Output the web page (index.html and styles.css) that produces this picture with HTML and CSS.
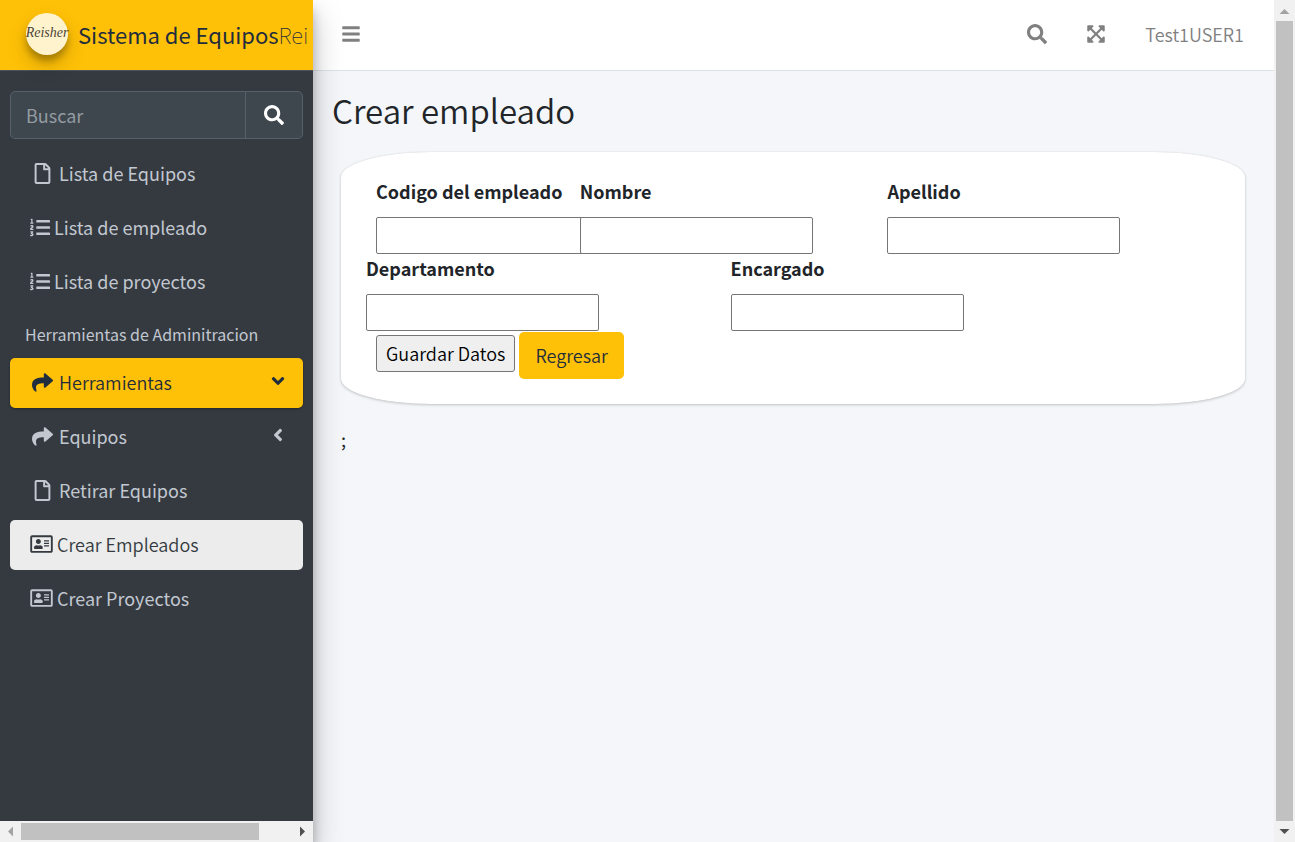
FILE: index.html
```html
<!DOCTYPE html>
<html lang="es">
<head>
<meta charset="utf-8">
<title>Crear empleado</title>
<link rel="stylesheet" href="styles.css">
</head>
<body>
<svg class="sprite" aria-hidden="true">
  <symbol id="file" viewBox="0 0 384 512"><path d="M369.9 97.9L286 14C277 5 264.8-.1 252.1-.1H48C21.5 0 0 21.5 0 48v416c0 26.500 21.500 48 48 48h288c26.500 0 48-21.500 48-48V131.900c0-12.700-5.100-25-14.100-34zM332.100 128H256V51.900l76.100 76.100zM48 464V48h160v104c0 13.300 10.700 24 24 24h104v288H48z"/></symbol>
  <symbol id="share" viewBox="0 0 512 512"><path d="M503.691 189.836L327.687 37.851C312.281 24.546 288 35.347 288 56.015v80.053C127.371 137.907 0 170.100 0 322.326c0 61.441 39.581 122.309 83.333 154.132 13.653 9.931 33.111-2.533 28.077-18.631C66.066 312.814 132.917 274.316 288 272.085V360c0 20.700 24.300 31.453 39.687 18.164l176.004-152c11.071-9.562 11.086-26.753 0-36.328z"/></symbol>
  <symbol id="bars" viewBox="0 0 448 512"><path d="M16 132h416c8.837 0 16-7.163 16-16V76c0-8.837-7.163-16-16-16H16C7.163 60 0 67.163 0 76v40c0 8.837 7.163 16 16 16zm0 160h416c8.837 0 16-7.163 16-16v-40c0-8.837-7.163-16-16-16H16c-8.837 0-16 7.163-16 16v40c0 8.837 7.163 16 16 16zm0 160h416c8.837 0 16-7.163 16-16v-40c0-8.837-7.163-16-16-16H16c-8.837 0-16 7.163-16 16v40c0 8.837 7.163 16 16 16z"/></symbol>
  <symbol id="search" viewBox="0 0 512 512"><path d="M505 442.700L405.300 343c-4.500-4.500-10.600-7-17-7H372c27.600-35.300 44-79.700 44-128C416 93.100 322.900 0 208 0S0 93.100 0 208s93.100 208 208 208c48.300 0 92.700-16.400 128-44v16.300c0 6.400 2.500 12.500 7 17l99.700 99.700c9.400 9.400 24.600 9.400 33.900 0l28.300-28.300c9.400-9.400 9.400-24.600.1-34zM208 336c-70.700 0-128-57.200-128-128 0-70.700 57.200-128 128-128 70.700 0 128 57.200 128 128 0 70.700-57.200 128-128 128z"/></symbol>
  <symbol id="expand" viewBox="0 0 448 512"><path d="M448 344v112a23.940 23.940 0 0 1-24 24H312c-21.390 0-32.090-25.900-17-41l36.200-36.200L224 295.600 116.770 402.900 153 439c15.090 15.100 4.390 41-17 41H24a23.940 23.940 0 0 1-24-24V344c0-21.400 25.890-32.100 41-17l36.190 36.200L184.460 256 77.180 148.700 41 185c-15.100 15.100-41 4.400-41-17V56a23.940 23.940 0 0 1 24-24h112c21.390 0 32.090 25.900 17 41l-36.200 36.200L224 216.400l107.230-107.300L295 73c-15.090-15.100-4.390-41 17-41h112a23.940 23.940 0 0 1 24 24v112c0 21.400-25.890 32.100-41 17l-36.190-36.200L263.540 256l107.280 107.300L407 327.100c15.100-15.200 41-4.500 41 16.900z"/></symbol>
  <symbol id="angle" viewBox="0 0 256 512"><path d="M31.700 239l136-136c9.400-9.400 24.600-9.400 33.900 0l22.600 22.600c9.400 9.400 9.400 24.600 0 33.900L127.900 256l96.400 96.400c9.400 9.400 9.400 24.600 0 33.900L201.700 409c-9.400 9.400-24.600 9.400-33.900 0l-136-136c-9.500-9.400-9.500-24.600-.1-34z"/></symbol>
  <symbol id="list" viewBox="0 0 512 512"><path d="M61.770 401l17.500-20.150a19.920 19.920 0 0 0 5.070-14.190v-3.310C84.340 356 80.500 352 73 352H16a8 8 0 0 0-8 8v16a8 8 0 0 0 8 8h22.830a157.410 157.410 0 0 0-11 12.310l-5.610 7c-4 5.070-5.250 10.130-2.800 14.880l1.050 1.930c3 5.760 6.290 7.880 12.250 7.880h4.730c10.330 0 15.940 2.440 15.940 9.090 0 4.720-4.200 8.220-14.360 8.220a41.540 41.540 0 0 1-15.470-3.120c-6.490-3.880-11.740-3.500-15.600 3.120l-5.590 9.310c-3.720 6.130-3.190 11.720 2.630 15.940 7.710 4.690 20.380 9.440 37 9.440 34.160 0 48.500-22.750 48.500-44.120-.03-14.380-9.120-29.760-28.730-34.880zM496 224H176a16 16 0 0 0-16 16v32a16 16 0 0 0 16 16h320a16 16 0 0 0 16-16v-32a16 16 0 0 0-16-16zm0-160H176a16 16 0 0 0-16 16v32a16 16 0 0 0 16 16h320a16 16 0 0 0 16-16V80a16 16 0 0 0-16-16zm0 320H176a16 16 0 0 0-16 16v32a16 16 0 0 0 16 16h320a16 16 0 0 0 16-16v-32a16 16 0 0 0-16-16zM16 160h64a8 8 0 0 0 8-8v-16a8 8 0 0 0-8-8H64V40a8 8 0 0 0-8-8H32a8 8 0 0 0-7.140 4.420l-8 16A8 8 0 0 0 24 64h8v64H16a8 8 0 0 0-8 8v16a8 8 0 0 0 8 8zm-3.910 160H80a8 8 0 0 0 8-8v-16a8 8 0 0 0-8-8H41.320c3.290-10.290 48.340-18.680 48.340-56.440 0-29.060-25-39.560-44.470-39.560-21.360 0-33.800 10-40.460 18.750-4.370 5.590-3 10.840 2.800 15.370l8.580 6.880c5.610 4.560 11 2.470 16.120-2.440a13.440 13.440 0 0 1 9.460-3.840c3.330 0 9.280 1.560 9.280 8.750C51 248.190 0 257.310 0 304.590v4C0 316 5.080 320 12.090 320z"/></symbol>
  <symbol id="card" viewBox="0 0 576 512"><path d="M528 32H48C21.500 32 0 53.500 0 80v352c0 26.500 21.500 48 48 48h480c26.500 0 48-21.500 48-48V80c0-26.500-21.500-48-48-48zm0 400H48V80h480v352zM208 256c35.300 0 64-28.700 64-64s-28.700-64-64-64-64 28.700-64 64 28.700 64 64 64zm-89.600 128h179.200c12.400 0 22.400-8.600 22.400-19.200v-19.200c0-31.800-30.100-57.600-67.200-57.600-10.800 0-18.700 8-44.800 8-26.900 0-33.400-8-44.800-8-37.100 0-67.200 25.800-67.200 57.600v19.200c0 10.600 10 19.200 22.400 19.200zM360 320h112c4.400 0 8-3.600 8-8v-16c0-4.400-3.600-8-8-8H360c-4.400 0-8 3.600-8 8v16c0 4.400 3.600 8 8 8zm0-64h112c4.400 0 8-3.600 8-8v-16c0-4.400-3.600-8-8-8H360c-4.400 0-8 3.600-8 8v16c0 4.400 3.600 8 8 8zm0-64h112c4.400 0 8-3.600 8-8v-16c0-4.400-3.600-8-8-8H360c-4.400 0-8 3.600-8 8v16c0 4.400 3.600 8 8 8z"/></symbol>
</svg>

<div class="app">
  <aside class="sidebar">
    <a class="brand" href="#"><span class="logo">Reisher</span><span class="brand-text">Sistema de Equipos<span class="brand-light">Rei</span></span></a>
    <div class="side-body">
      <form class="side-search" role="search">
        <input type="search" placeholder="Buscar" aria-label="Buscar">
        <button type="button" aria-label="Buscar"><svg class="icon-20"><use href="#search"/></svg></button>
      </form>
      <nav class="menu">
        <a class="item" href="#"><span class="slot"><svg class="icon-file"><use href="#file"/></svg></span>Lista de Equipos</a>
        <a class="item" href="#"><svg class="icon-list"><use href="#list"/></svg>Lista de empleado</a>
        <a class="item" href="#"><svg class="icon-list"><use href="#list"/></svg>Lista de proyectos</a>
        <h2 class="menu-title">Herramientas de Adminitracion</h2>
        <a class="item active" href="#"><span class="slot"><svg class="icon-22"><use href="#share"/></svg></span>Herramientas<svg class="arrow open"><use href="#angle"/></svg></a>
        <a class="item" href="#"><span class="slot"><svg class="icon-22"><use href="#share"/></svg></span>Equipos<svg class="arrow"><use href="#angle"/></svg></a>
        <a class="item" href="#"><span class="slot"><svg class="icon-file"><use href="#file"/></svg></span>Retirar Equipos</a>
        <a class="item current" href="#"><svg class="icon-card"><use href="#card"/></svg>Crear Empleados</a>
        <a class="item" href="#"><svg class="icon-card"><use href="#card"/></svg>Crear Proyectos</a>
      </nav>
    </div>
    <div class="bar bar-x" aria-hidden="true">
      <svg class="tip" viewBox="0 0 21 21"><path fill="#a3a3a3" d="M8 10.500 13 5.500v10z"/></svg>
      <div class="track"><div class="thumb"></div></div>
      <svg class="tip" viewBox="0 0 21 21"><path fill="#505050" d="M13 10.500 8 5.500v10z"/></svg>
    </div>
  </aside>

  <div class="page">
    <header class="topbar">
      <button type="button" aria-label="Menú"><svg class="icon-bars"><use href="#bars"/></svg></button>
      <div class="tools">
        <button type="button" aria-label="Buscar"><svg class="icon-20"><use href="#search"/></svg></button>
        <button type="button" aria-label="Pantalla completa"><svg class="icon-bars"><use href="#expand"/></svg></button>
        <a href="#">Test1USER1</a>
      </div>
    </header>
    <main class="content">
      <h1>Crear empleado</h1>
      <form class="panel">
        <div class="row row-three">
          <div class="field"><label for="codigo">Codigo del empleado</label><input id="codigo" type="text"></div>
          <div class="field"><label for="nombre">Nombre</label><input id="nombre" type="text"></div>
          <div class="field"><label for="apellido">Apellido</label><input id="apellido" type="text"></div>
        </div>
        <div class="row row-two">
          <div class="field"><label for="departamento">Departamento</label><input id="departamento" type="text"></div>
          <div class="field"><label for="encargado">Encargado</label><input id="encargado" type="text"></div>
        </div>
        <div class="actions">
          <button class="save" type="button">Guardar Datos</button>
          <a class="back" href="#">Regresar</a>
        </div>
      </form>
      <p class="note">;</p>
    </main>
  </div>

  <div class="bar bar-y" aria-hidden="true">
    <svg class="tip" viewBox="0 0 21 21"><path fill="#a3a3a3" d="M10.500 9 15.500 14h-10z"/></svg>
    <div class="track"><div class="thumb"></div></div>
    <svg class="tip" viewBox="0 0 21 21"><path fill="#505050" d="M10.500 13 15.500 8h-10z"/></svg>
  </div>
</div>
</body>
</html>
```
FILE: styles.css
```css
* { box-sizing: border-box; }

body {
  margin: 0;
  font-family: "Noto Sans CJK SC", "Noto Sans", sans-serif;
  font-size: 18px;
  font-weight: 400;
  line-height: 28px;
  color: #212529;
  background: #f4f6f9;
}

h1, h2, p { margin: 0; font-weight: inherit; }
a { color: inherit; text-decoration: none; }
button, input { font: inherit; }
svg { display: block; fill: currentColor; flex: none; }
.sprite { display: none; }

.app {
  display: grid;
  grid-template-columns: 313px minmax(0, 1fr) 21px;
  min-height: 100vh;
}

/* Sidebar */
.sidebar {
  display: flex;
  flex-direction: column;
  z-index: 1;
  color: #c2c7d0;
  background: #343a40;
  box-shadow: 0 14px 28px rgba(0, 0, 0, .25), 0 10px 10px rgba(0, 0, 0, .22);
}

.brand {
  display: flex;
  align-items: center;
  gap: 10px;
  height: 71px;
  padding: 0 0 3px 26px;
  white-space: nowrap;
  color: #1f2d3d;
  background: #ffc107;
  border-bottom: 1px solid #4b545c;
}

.logo {
  display: flex;
  align-items: center;
  justify-content: center;
  flex: none;
  width: 42px;
  height: 42px;
  padding-bottom: 2px;
  border-radius: 50%;
  font: italic 14px "Liberation Serif", serif;
  color: #4b4436;
  background: #fff3cd;
  box-shadow: 0 10px 20px rgba(0, 0, 0, .19), 0 6px 6px rgba(0, 0, 0, .23);
}

.brand-text { font-size: 22px; }
.brand-light { font-weight: 100; }

.side-body { flex: 1; padding: 20px 10px; }

.side-search {
  display: flex;
  height: 48px;
  margin-bottom: 10px;
  border: 1px solid #56606a;
  border-radius: 5px;
  background: #3f474e;
  overflow: hidden;
}

.side-search input {
  flex: 1;
  min-width: 0;
  padding: 0 15px;
  border: 0;
  color: #fff;
  background: none;
}

.side-search input::placeholder { color: #939ba2; opacity: 1; }

.side-search button {
  display: grid;
  place-items: center;
  width: 57px;
  padding: 0;
  border: 0;
  border-left: 1px solid #56606a;
  color: #fff;
  background: none;
}

.menu { display: flex; flex-direction: column; gap: 4px; }

.item {
  display: flex;
  align-items: center;
  gap: 4px;
  height: 50px;
  padding: 0 20px 2px;
  border-radius: 5px;
}

.active {
  font-weight: 350;
  color: #1f2d3d;
  background: #ffc107;
  box-shadow: 0 1px 3px rgba(0, 0, 0, .12), 0 1px 2px rgba(0, 0, 0, .24);
}

.current { font-weight: 350; color: #343a40; background: #ebeceb; }

.slot { display: grid; place-items: center; width: 25px; }

.menu-title { height: 43px; padding: 9px 15px 0; font-size: 16px; }

.arrow { width: 10px; height: 20px; margin: 0 0 2px auto; }
.open { transform: rotate(-90deg); }

.icon-20 { width: 20px; height: 20px; }
.icon-22 { width: 21px; height: 21px; }
.icon-file { width: 17px; height: 21px; }
.icon-list { width: 20px; height: 21px; }
.icon-card { width: 23px; height: 20px; }
.icon-bars { width: 18px; height: 20px; }

/* Scroll bars */
.bar { display: flex; background: #f1f1f1; }
.bar-x { height: 21px; }
.bar-y { flex-direction: column; height: 100vh; }
.tip { width: 21px; height: 21px; }
.track { flex: 1; }
.thumb { background: #c1c1c1; }
.bar-x .track { padding: 2px 0; }
.bar-x .thumb { width: 88%; height: 17px; }
.bar-y .track { padding: 0 2px; }
.bar-y .thumb { height: 100%; }

/* Page */
.topbar {
  display: flex;
  align-items: center;
  justify-content: space-between;
  height: 71px;
  padding: 0 30px 2px 29px;
  color: #808080;
  background: #fff;
  border-bottom: 1px solid #dee2e6;
}

.topbar button { padding: 0; border: 0; color: inherit; background: none; }
.tools { display: flex; align-items: center; gap: 40px; font-weight: 350; }

.content { padding: 20px 29px 20px 19px; }
.content h1 { font-size: 33px; font-weight: 350; line-height: 38px; }

.panel {
  margin: 23px 0 0 9px;
  padding: 25px;
  border-radius: 10%;
  background: #fff;
  box-shadow: 0 0 1px rgba(0, 0, 0, .13), 0 1px 3px rgba(0, 0, 0, .2);
}

.row { display: grid; }
.row-three { grid-template-columns: minmax(0, 204fr) minmax(0, 308fr) minmax(0, 333fr); padding-left: 10px; }
.row-two { grid-template-columns: minmax(0, 365fr) minmax(0, 490fr); padding-bottom: 1px; }

.field label { display: block; margin-bottom: 12px; font-weight: 700; white-space: nowrap; }

.field input {
  display: block;
  width: 233px;
  height: 37px;
  padding: 0 4px;
  border: 1px solid #767676;
  border-radius: 2px;
  background: #fff;
}

.actions {
  display: flex;
  align-items: flex-start;
  gap: 4px;
  padding-left: 10px;
  font-weight: 350;
}

.save {
  height: 37px;
  margin-top: 3px;
  padding: 0 9px 2px;
  border: 1px solid #767676;
  border-radius: 3px;
  color: #000;
  background: #efefef;
}

.back {
  padding: 9px 16px 10px;
  border-radius: 5px;
  color: #1f2d3d;
  background: #ffc107;
}

.note { margin: 21px 0 0 9px; }
```
